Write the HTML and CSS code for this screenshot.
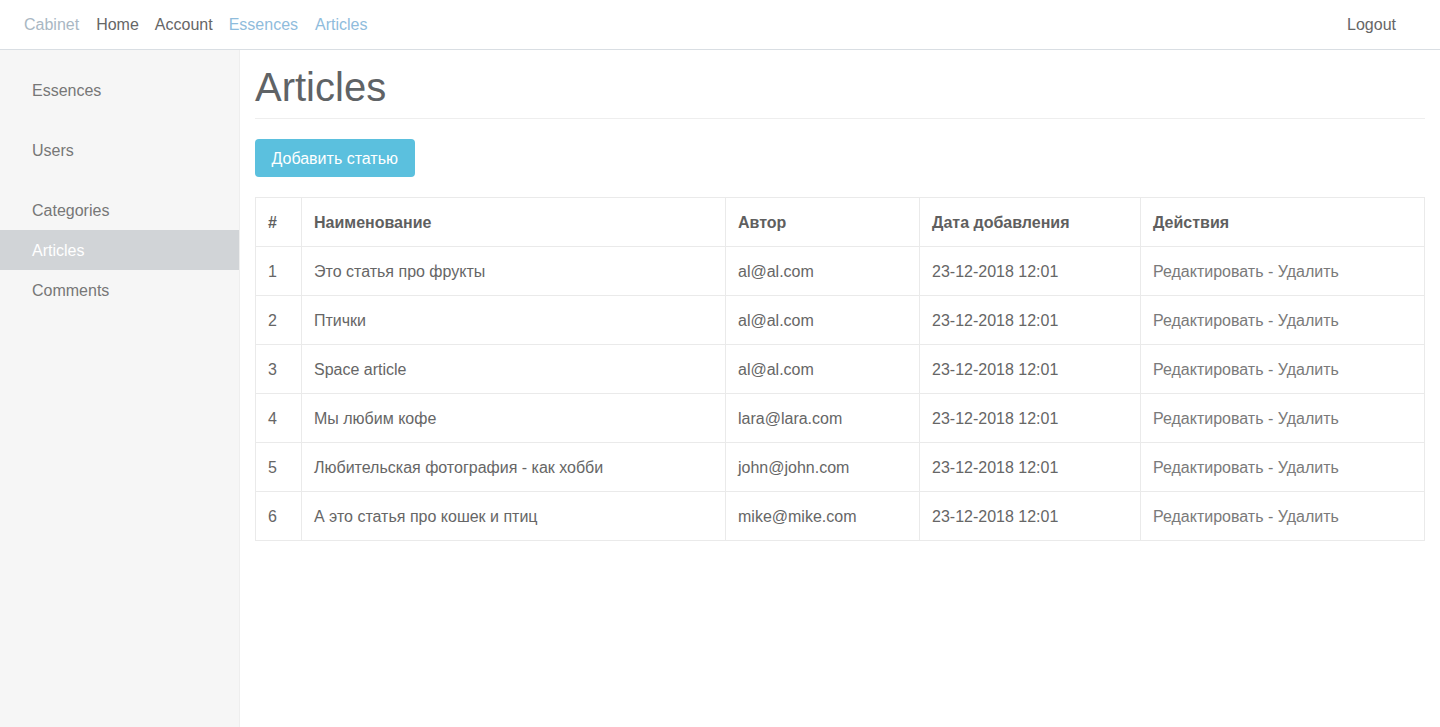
FILE: index.html
```html
<!DOCTYPE html>
<html lang="ru">
<head>
<meta charset="utf-8">
<title>Articles</title>
<link rel="stylesheet" href="styles.css">
</head>
<body>
<header class="navbar">
  <nav class="nav-left">
    <a class="brand" href="#">Cabinet</a>
    <a class="nl" href="#">Home</a>
    <a class="nl" href="#">Account</a>
    <a class="nl blue" href="#">Essences</a>
    <a class="nl blue last" href="#">Articles</a>
  </nav>
  <nav class="nav-right">
    <a class="nl" href="#">Logout</a>
  </nav>
</header>
<div class="layout">
  <aside class="sidebar">
    <ul class="side-group">
      <li><a href="#">Essences</a></li>
    </ul>
    <ul class="side-group">
      <li><a href="#">Users</a></li>
    </ul>
    <ul class="side-group">
      <li><a href="#">Categories</a></li>
      <li class="active"><a href="#">Articles</a></li>
      <li><a href="#">Comments</a></li>
    </ul>
  </aside>
  <main class="main">
    <h1 class="page-header">Articles</h1>
    <a class="btn-info" href="#">Добавить статью</a>
    <table class="table">
      <colgroup>
        <col class="c1"><col class="c2"><col class="c3"><col class="c4"><col class="c5">
      </colgroup>
      <thead>
        <tr><th>#</th><th>Наименование</th><th>Автор</th><th>Дата добавления</th><th>Действия</th></tr>
      </thead>
      <tbody>
        <tr><td>1</td><td>Это статья про фрукты</td><td>al@al.com</td><td>23-12-2018 12:01</td><td class="act"><a href="#">Редактировать</a> - <a href="#">Удалить</a></td></tr>
        <tr><td>2</td><td>Птички</td><td>al@al.com</td><td>23-12-2018 12:01</td><td class="act"><a href="#">Редактировать</a> - <a href="#">Удалить</a></td></tr>
        <tr><td>3</td><td>Space article</td><td>al@al.com</td><td>23-12-2018 12:01</td><td class="act"><a href="#">Редактировать</a> - <a href="#">Удалить</a></td></tr>
        <tr><td>4</td><td>Мы любим кофе</td><td>lara@lara.com</td><td>23-12-2018 12:01</td><td class="act"><a href="#">Редактировать</a> - <a href="#">Удалить</a></td></tr>
        <tr><td>5</td><td>Любительская фотография - как хобби</td><td>john@john.com</td><td>23-12-2018 12:01</td><td class="act"><a href="#">Редактировать</a> - <a href="#">Удалить</a></td></tr>
        <tr><td>6</td><td>А это статья про кошек и птиц</td><td>mike@mike.com</td><td>23-12-2018 12:01</td><td class="act"><a href="#">Редактировать</a> - <a href="#">Удалить</a></td></tr>
      </tbody>
    </table>
  </main>
</div>
</body>
</html>
```
FILE: styles.css
```css
* { box-sizing: border-box; }
html, body { margin: 0; padding: 0; height: 100%; }
body {
  font-family: "Liberation Sans", Arial, sans-serif;
  font-size: 16px;
  line-height: 1.5;
  color: #666;
  background: #fff;
}
a { text-decoration: none; }

.navbar {
  height: 50px;
  display: flex;
  justify-content: space-between;
  align-items: center;
  padding: 0 36px 0 16px;
  border-bottom: 1px solid #d9dee3;
  background: #fff;
}
.nav-left, .nav-right { display: flex; align-items: center; }
.navbar a { padding: 0 8px; line-height: 48px; color: #666; }
.navbar a.brand { color: #a9b7c3; padding-right: 9px; }
.navbar a.blue { color: #8fbcdc; }
.navbar a.last { margin-left: 1px; }

.layout {
  display: flex;
  min-height: calc(100% - 50px);
}
.sidebar {
  width: 240px;
  flex: 0 0 240px;
  background: #f6f6f6;
  border-right: 1px solid #eee;
  padding-top: 20px;
}
.side-group { list-style: none; margin: 0 0 20px; padding: 0; }
.side-group li a {
  display: block;
  height: 40px;
  line-height: 40px;
  padding: 1px 0 0 32px;
  color: #777;
}
.side-group li.active a { background: #d1d4d7; color: #fff; }

.main {
  flex: 1;
  padding: 15px 15px 0 15px;
}
.page-header {
  margin: 0 0 20px;
  padding-bottom: 9px;
  font-size: 40px;
  font-weight: 400;
  line-height: 44px;
  color: #5f6366;
  border-bottom: 1px solid #eee;
}
.btn-info {
  display: inline-block;
  height: 38px;
  line-height: 38px;
  padding: 1px 16.5px 0;
  background: #5bc0de;
  color: #fff;
  border-radius: 4px;
}
.table {
  margin-top: 20px;
  width: 100%;
  border-collapse: collapse;
  table-layout: fixed;
  border: 1px solid #eaeaea;
}
.table col.c1 { width: 46px; }
.table col.c2 { width: 424px; }
.table col.c3 { width: 194px; }
.table col.c4 { width: 221px; }
.table col.c5 { width: auto; }
.table th, .table td {
  border: 1px solid #eaeaea;
  padding: 13px 12px 11px;
  height: 49px;
  text-align: left;
  vertical-align: middle;
  white-space: nowrap;
}
.table th { font-weight: 700; color: #5f5f5f; }
.table td { color: #666; }
.table td.act, .table td.act a { color: #7a7a7a; }
```
